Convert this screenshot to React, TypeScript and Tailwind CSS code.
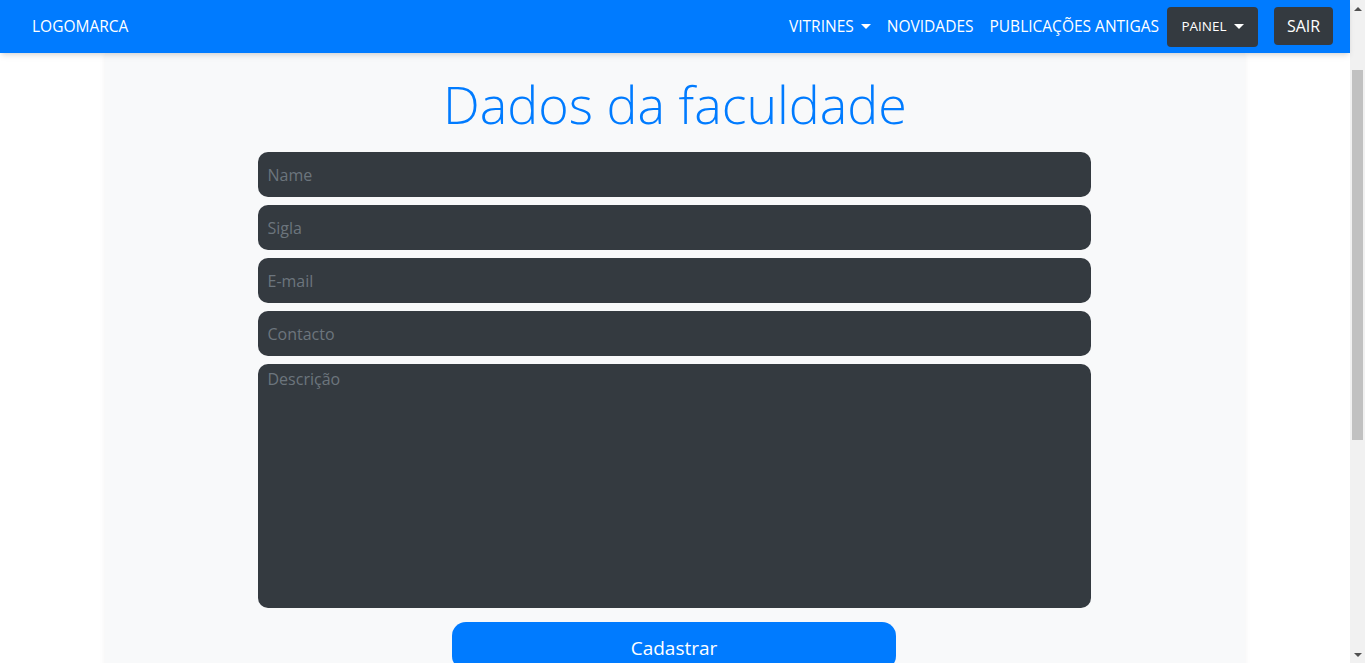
import { useState } from "react";

const fields = ["Name", "Sigla", "E-mail", "Contacto"];

function Caret() {
  return <span className="ml-[7px] inline-block align-middle border-x-[5px] border-t-[5px] border-x-transparent border-t-white" />;
}

// browser scrollbar seen on the right edge of the window
function Scrollbar() {
  return (
    <div className="sticky top-0 flex h-[663px] w-[15px] shrink-0 flex-col bg-[#f1f1f1]">
      <div className="flex h-[17px] items-center justify-center">
        <span className="border-x-[4px] border-b-[4px] border-x-transparent border-b-[#505050]" />
      </div>
      <div className="flex-1 px-[2px] pt-[53px]">
        <div className="h-[370px] bg-[#c1c1c1]" />
      </div>
      <div className="flex h-[17px] items-center justify-center">
        <span className="border-x-[4px] border-t-[4px] border-x-transparent border-t-[#505050]" />
      </div>
    </div>
  );
}

export default function App() {
  const [values, setValues] = useState<Record<string, string>>({});

  return (
    <div className="flex items-start bg-white font-['Open_Sans',sans-serif] text-[#212529]">
      <div className="min-h-[1127px] min-w-0 flex-1">
        {/* Navbar */}
        <nav className="relative z-10 flex h-[53px] items-center justify-between bg-[#007bff] pl-8 pr-[17px] shadow-md">
          <a href="#" className="text-[15.5px] text-white">LOGOMARCA</a>
          <div className="flex items-center">
            <a href="#" className="flex items-center px-2 text-[15.5px] text-white">
              VITRINES
              <Caret />
            </a>
            <a href="#" className="px-2 text-[15.5px] text-white">NOVIDADES</a>
            <a href="#" className="px-2 text-[15.5px] text-white">PUBLICAÇÕES ANTIGAS</a>
            <button className="flex h-10 w-[91px] items-center justify-center rounded bg-[#343a40] text-[13.5px] text-white">
              PAINEL
              <Caret />
            </button>
            <button className="-mt-[2px] ml-4 h-[38px] w-[59px] rounded bg-[#343a40] text-[16px] text-white">SAIR</button>
          </div>
        </nav>

        {/* Content */}
        <div className="mx-auto min-h-[1074px] w-[1140px] bg-[#f8f9fa] shadow-[0_0_6px_rgba(0,0,0,0.06)]">
          <h1 className="pt-[20px] text-center text-[52px] leading-[1.2] font-light text-[#007bff]">Dados da faculdade</h1>
          <form className="mx-auto mt-[17px] flex w-[833px] -translate-x-px flex-col gap-2" onSubmit={(e) => e.preventDefault()}>
            {fields.map((f) => (
              <input
                key={f}
                placeholder={f}
                value={values[f] ?? ""}
                onChange={(e) => setValues({ ...values, [f]: e.target.value })}
                className="h-[45px] rounded-[10px] bg-[#343a40] px-[10px] text-[16px] text-white outline-none placeholder:text-[#6c757d]"
              />
            ))}
            <textarea
              placeholder="Descrição"
              className="h-[244px] resize-none rounded-[10px] bg-[#343a40] px-[10px] py-[3px] text-[16px] text-white outline-none placeholder:text-[#6c757d]"
            />
            <button
              type="submit"
              className="mx-auto mt-[6px] h-12 w-[444px] rounded-[14px] bg-[#007bff] pt-[3px] text-[19px] text-white"
            >
              Cadastrar
            </button>
          </form>
        </div>
      </div>
      <Scrollbar />
    </div>
  );
}
